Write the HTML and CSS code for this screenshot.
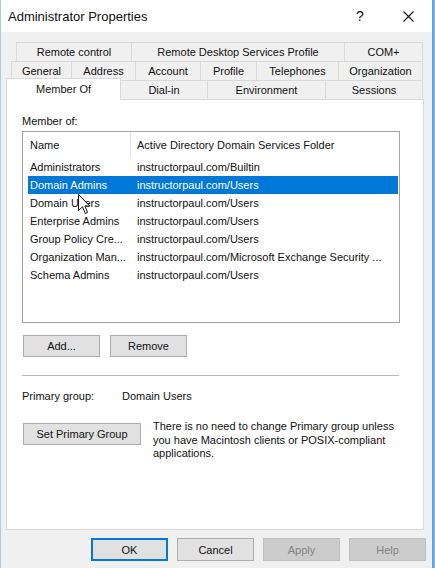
FILE: index.html
```html
<!DOCTYPE html>
<html>
<head>
<meta charset="utf-8">
<link rel="stylesheet" href="styles.css">
</head>
<body>
<div class="screen">
  <div class="window">
    <div class="titlebar">
      <span class="title">Administrator Properties</span>
      <span class="tb-btn help">?</span>
      <span class="tb-btn">
        <svg width="11" height="11" viewBox="0 0 11 11"><path d="M0.5 0.5 L10.5 10.5 M10.5 0.5 L0.5 10.5" stroke="#111" stroke-width="1.1" fill="none"/></svg>
      </span>
    </div>
    <div class="body">
      <div class="tabs">
        <div class="tabrow row1">
          <div class="tab w116">Remote control</div>
          <div class="tab w214">Remote Desktop Services Profile</div>
          <div class="tab w79">COM+</div>
        </div>
        <div class="tabrow row2">
          <div class="tab w61">General</div>
          <div class="tab w65">Address</div>
          <div class="tab w66">Account</div>
          <div class="tab w57">Profile</div>
          <div class="tab w83">Telephones</div>
          <div class="tab w85">Organization</div>
        </div>
        <div class="tabrow row3">
          <div class="tab selected w115">Member Of</div>
          <div class="tab w88">Dial-in</div>
          <div class="tab w119">Environment</div>
          <div class="tab w98">Sessions</div>
        </div>
      </div>
      <div class="panel">
        <div class="label">Member of:</div>
        <div class="listbox">
          <div class="lv-header">
            <div class="hname">Name</div>
            <div class="divider"></div>
            <div class="hfolder">Active Directory Domain Services Folder</div>
          </div>
          <div class="lv-row"><span class="c-name">Administrators</span><span class="c-folder">instructorpaul.com/Builtin</span></div>
          <div class="lv-row sel"><span class="c-name">Domain Admins</span><span class="c-folder">instructorpaul.com/Users</span></div>
          <div class="lv-row"><span class="c-name">Domain Users</span><span class="c-folder">instructorpaul.com/Users</span></div>
          <div class="lv-row"><span class="c-name">Enterprise Admins</span><span class="c-folder">instructorpaul.com/Users</span></div>
          <div class="lv-row"><span class="c-name">Group Policy Cre...</span><span class="c-folder">instructorpaul.com/Users</span></div>
          <div class="lv-row"><span class="c-name">Organization Man...</span><span class="c-folder">instructorpaul.com/Microsoft Exchange Security ...</span></div>
          <div class="lv-row"><span class="c-name">Schema Admins</span><span class="c-folder">instructorpaul.com/Users</span></div>
          <svg class="cursor" width="13" height="21" viewBox="0 0 13 21"><path d="M0.5 0.5 L0.5 16.5 L4.5 12.8 L7.3 19.5 L9.6 18.5 L6.9 12 L11.8 12 Z" fill="#fff" stroke="#111" stroke-width="1" stroke-linejoin="round"/></svg>
        </div>
        <div class="btnrow">
          <button class="btn">Add...</button>
          <button class="btn">Remove</button>
        </div>
        <div class="sep"></div>
        <div class="primary">
          <span class="plabel">Primary group:</span>
          <span>Domain Users</span>
        </div>
        <div class="setrow">
          <button class="btn wide">Set Primary Group</button>
          <p class="desc">There is no need to change Primary group unless<br>you have Macintosh clients or POSIX-compliant<br>applications.</p>
        </div>
      </div>
      <div class="footer">
        <button class="btn fbtn default">OK</button>
        <button class="btn fbtn">Cancel</button>
        <button class="btn fbtn disabled">Apply</button>
        <button class="btn fbtn disabled">Help</button>
      </div>
    </div>
  </div>
  <div class="strip"></div>
</div>
</body>
</html>
```

FILE: styles.css
```css
html, body {
  margin: 0;
  padding: 0;
}
body {
  font-family: "Liberation Sans", Arial, sans-serif;
  font-size: 11px;
  color: #111;
  background: #f0f0f0;
}
.screen {
  display: flex;
  width: 435px;
  height: 568px;
  overflow: hidden;
}
.window {
  width: 432px;
  height: 568px;
  box-sizing: border-box;
  border-left: 1px solid #a9cdee;
  background: #f0f0f0;
  display: flex;
  flex-direction: column;
}
.strip {
  width: 3px;
  height: 568px;
  background: linear-gradient(to right, #5d9ad6, #8dbbe8);
}
.titlebar {
  height: 32px;
  background: #fff;
  display: flex;
  align-items: center;
  flex-shrink: 0;
}
.title {
  flex: 1;
  padding-left: 7px;
  font-size: 13px;
  color: #111;
}
.tb-btn {
  width: 48px;
  height: 32px;
  display: flex;
  align-items: center;
  justify-content: center;
  font-size: 14px;
}
.body {
  padding: 10px 0 0 5px;
  flex: 1;
  display: flex;
  flex-direction: column;
}
.tabs {
  display: flex;
  flex-direction: column;
}
.tabrow {
  display: flex;
  height: 19px;
  align-items: flex-end;
}
.row1 { padding-left: 10px; }
.row2 { padding-left: 5px; }
.tab {
  height: 19px;
  box-sizing: border-box;
  border: 1px solid #d9d9d9;
  border-bottom: none;
  margin-left: -1px;
  text-align: center;
  line-height: 18px;
  white-space: nowrap;
  background: #f0f0f0;
}
.tab:first-child { margin-left: 0; }
.tab.selected {
  height: 22px;
  margin-bottom: -1px;
  background: #fff;
  line-height: 20px;
  position: relative;
  z-index: 1;
}
.w57 { width: 57px; }
.w61 { width: 61px; }
.w65 { width: 65px; }
.w66 { width: 66px; }
.w79 { width: 79px; }
.w83 { width: 83px; }
.w85 { width: 85px; }
.w88 { width: 88px; }
.w98 { width: 98px; }
.w115 { width: 115px; }
.w116 { width: 116px; }
.w119 { width: 119px; }
.w214 { width: 214px; }

.panel {
  width: 418px;
  height: 431px;
  box-sizing: border-box;
  background: #fff;
  border: 1px solid #d9d9d9;
  padding: 14px 0 0 15px;
}
.label {
  line-height: 14px;
}
.listbox {
  margin-top: 3px;
  width: 378px;
  height: 192px;
  box-sizing: border-box;
  border: 1px solid #a3a3a3;
  position: relative;
  overflow: hidden;
}
.lv-header {
  display: flex;
  height: 26px;
  align-items: center;
}
.hname {
  width: 100px;
  padding-left: 7px;
}
.divider {
  width: 1px;
  height: 26px;
  background: #e5e5e5;
}
.hfolder {
  padding-left: 6px;
}
.lv-row {
  display: flex;
  height: 18px;
  line-height: 18px;
  margin: 0 1px 0 5px;
  white-space: nowrap;
}
.lv-row.sel {
  background: #0078d7;
  color: #fff;
}
.c-name {
  width: 107px;
  box-sizing: border-box;
  padding-left: 2px;
}
.c-folder {
  padding-left: 2px;
}
.cursor {
  position: absolute;
  left: 55px;
  top: 62px;
}
.btnrow {
  display: flex;
  gap: 10px;
  margin-top: 12px;
  padding-left: 1px;
}
.btn {
  font-family: "Liberation Sans", Arial, sans-serif;
  font-size: 11px;
  color: #111;
  width: 77px;
  height: 22px;
  box-sizing: border-box;
  background: #e1e1e1;
  border: 1px solid #adadad;
  padding: 0;
  margin: 0;
}
.btn.wide {
  width: 118px;
  margin-top: 3px;
  margin-left: 1px;
  flex-shrink: 0;
}
.sep {
  margin-top: 18px;
  width: 377px;
  height: 1px;
  background: #b9b9b9;
}
.primary {
  margin-top: 13px;
  line-height: 14px;
  display: flex;
}
.plabel {
  width: 100px;
}
.setrow {
  margin-top: 17px;
  display: flex;
  align-items: flex-start;
}
.desc {
  margin: 0 0 0 12px;
  line-height: 13.5px;
  white-space: nowrap;
}
.footer {
  display: flex;
  justify-content: flex-end;
  gap: 9px;
  padding: 8px 6px 0 0;
}
.fbtn {
  height: 23px;
}
.fbtn.default {
  border: 2px solid #0078d7;
}
.fbtn.disabled {
  background: #cccccc;
  border-color: #bfbfbf;
  color: #838383;
}
```
